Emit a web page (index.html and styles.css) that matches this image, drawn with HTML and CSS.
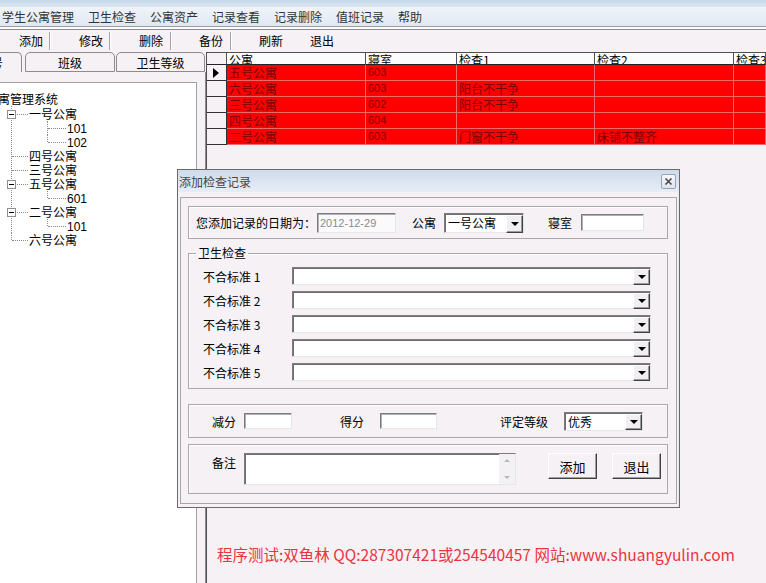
FILE: index.html
```html
<!DOCTYPE html>
<html lang="zh-CN">
<head>
<meta charset="utf-8">
<title>学生公寓管理</title>
<link rel="stylesheet" href="styles.css">
</head>
<body>
<div class="app">
  <div class="titlestrip"></div>
  <div class="menubar">
    <span>学生公寓管理</span><span>卫生检查</span><span>公寓资产</span><span>记录查看</span><span>记录删除</span><span>值班记录</span><span>帮助</span>
  </div>
  <div class="rule"></div>
  <div class="toolbar">
    <span class="tb tb1">添加</span><span class="tbsep"></span>
    <span class="tb tb2">修改</span><span class="tbsep"></span>
    <span class="tb tb3">删除</span><span class="tbsep"></span>
    <span class="tb tb4">备份</span><span class="tbsep"></span>
    <span class="tb tb5">刷新</span>
    <span class="tb tb6">退出</span>
  </div>
  <div class="main">
    <div class="leftpane">
      <div class="tabs">
        <div class="tab t0"><span>学号</span></div>
        <div class="tab t1">班级</div>
        <div class="tab t2">卫生等级</div>
      </div>
      <div class="tabbody">
        <div class="tree">
          <div class="row root"><span class="lbl">公寓管理系统</span></div>
          <ul class="l1">
            <li>
              <div class="row"><span class="box"></span><span class="lbl">一号公寓</span></div>
              <ul class="l2">
                <li><div class="row"><span class="lbl num">101</span></div></li>
                <li><div class="row"><span class="lbl num">102</span></div></li>
              </ul>
            </li>
            <li><div class="row"><span class="lbl">四号公寓</span></div></li>
            <li><div class="row"><span class="lbl">三号公寓</span></div></li>
            <li>
              <div class="row"><span class="box"></span><span class="lbl">五号公寓</span></div>
              <ul class="l2">
                <li><div class="row"><span class="lbl num">601</span></div></li>
              </ul>
            </li>
            <li>
              <div class="row"><span class="box"></span><span class="lbl">二号公寓</span></div>
              <ul class="l2">
                <li><div class="row"><span class="lbl num">101</span></div></li>
              </ul>
            </li>
            <li><div class="row"><span class="lbl">六号公寓</span></div></li>
          </ul>
        </div>
      </div>
    </div>
    <div class="gridpane">
      <div class="grid">
        <div class="gh ind"></div><div class="gh">公寓</div><div class="gh">寝室</div><div class="gh">检查1</div><div class="gh">检查2</div><div class="gh">检查3</div>

        <div class="gi"><span class="arrow"></span></div><div class="gc">五号公寓</div><div class="gc n">603</div><div class="gc"></div><div class="gc"></div><div class="gc"></div>
        <div class="gi"></div><div class="gc">六号公寓</div><div class="gc n">603</div><div class="gc">阳台不干争</div><div class="gc"></div><div class="gc"></div>
        <div class="gi"></div><div class="gc">三号公寓</div><div class="gc n">602</div><div class="gc">阳台不干争</div><div class="gc"></div><div class="gc"></div>
        <div class="gi"></div><div class="gc">四号公寓</div><div class="gc n">604</div><div class="gc"></div><div class="gc"></div><div class="gc"></div>
        <div class="gi"></div><div class="gc">二号公寓</div><div class="gc n">603</div><div class="gc">门窗不干争</div><div class="gc">床铺不整齐</div><div class="gc"></div>
      </div>
      <div class="footer">程序测试:双鱼林 QQ:287307421或254540457 网站:www.shuangyulin.com</div>
    </div>
  </div>
</div>

<div class="dialog">
  <div class="dlg-title">
    <span class="dlg-text">添加检查记录</span>
    <span class="dlg-close"><svg width="9" height="9" viewBox="0 0 9 9"><path d="M1.5 1.5 L7.5 7.5 M7.5 1.5 L1.5 7.5" stroke="#4a4a4a" stroke-width="1.6"/></svg></span>
  </div>
  <div class="dlg-body">
    <div class="panel">
      <div class="grp g1">
        <span class="t date-l">您添加记录的日期为：</span>
        <div class="field date">2012-12-29</div>
        <span class="t gy-l">公寓</span>
        <div class="combo gy"><span class="cv">一号公寓</span><span class="cb"><i></i></span></div>
        <span class="t qs-l">寝室</span>
        <div class="field qs"></div>
      </div>
      <fieldset class="grp g2">
        <legend>卫生检查</legend>
        <div class="crow"><span class="t cl">不合标准 1</span><div class="combo wide"><span class="cv"></span><span class="cb"><i></i></span></div></div>
        <div class="crow"><span class="t cl">不合标准 2</span><div class="combo wide"><span class="cv"></span><span class="cb"><i></i></span></div></div>
        <div class="crow"><span class="t cl">不合标准 3</span><div class="combo wide"><span class="cv"></span><span class="cb"><i></i></span></div></div>
        <div class="crow"><span class="t cl">不合标准 4</span><div class="combo wide"><span class="cv"></span><span class="cb"><i></i></span></div></div>
        <div class="crow"><span class="t cl">不合标准 5</span><div class="combo wide"><span class="cv"></span><span class="cb"><i></i></span></div></div>
      </fieldset>
      <div class="grp g3">
        <span class="t jf-l">减分</span>
        <div class="field jf"></div>
        <span class="t df-l">得分</span>
        <div class="field df"></div>
        <span class="t dj-l">评定等级</span>
        <div class="combo dj"><span class="cv">优秀</span><span class="cb"><i></i></span></div>
      </div>
      <div class="grp g4">
        <span class="t bz-l">备注</span>
        <div class="memo"><div class="memo-in"></div><div class="sb"><span class="up"></span><span class="dn"></span></div></div>
        <span class="btn add">添加</span>
        <span class="btn quit">退出</span>
      </div>
    </div>
  </div>
</div>
</body>
</html>
```

FILE: styles.css
```css
* { box-sizing: border-box; margin: 0; padding: 0; }
html, body { width: 766px; height: 583px; overflow: hidden; }
body {
  background: #f5f1f5;
  font-family: "Noto Sans CJK SC", "Noto Sans", sans-serif;
  font-size: 12px;
  color: #000;
  position: relative;
}
ul { list-style: none; }

.app { display: flex; flex-direction: column; height: 583px; }

.titlestrip { height: 7px; background: linear-gradient(#c6d7ea, #dbe6f2); }

.menubar {
  height: 19px;
  display: flex;
  gap: 14px;
  padding-left: 2px;
  align-items: center;
  background: linear-gradient(#f0f4fa, #e1e8f2);
  color: #333;
  line-height: 19px;
  white-space: nowrap;
}

.rule { height: 4px; border-top: 1px solid #9d9d9d; border-bottom: 1px solid #8c8c8c; background: #fdfdfd; }

.toolbar { height: 22px; display: flex; align-items: center; white-space: nowrap; }
.tb { height: 22px; line-height: 22px; display: block; }
.tb1 { width: 49px; padding-left: 19px; }
.tb2 { width: 58px; padding-left: 28px; }
.tb3 { width: 59px; padding-left: 28px; }
.tb4 { width: 58px; padding-left: 27px; }
.tb5 { width: 51px; padding-left: 27px; }
.tb6 { padding-left: 27px; }
.tbsep { width: 2px; height: 18px; border-left: 1px solid #a5a5a5; border-right: 1px solid #fff; }

.main { flex: 1; display: flex; min-height: 0; }

/* left pane */
.leftpane { width: 206px; display: flex; flex-direction: column; }
.tabs { height: 20px; display: flex; }
.tab {
  height: 20px;
  border: 1px solid #8c8c8c;
  border-radius: 5px 5px 0 0;
  display: flex; align-items: center; justify-content: center;
  background: #f5f1f5;
  white-space: nowrap;
}
.tab.t0 { width: 22px; border-left: none; border-bottom: none; justify-content: flex-end; overflow: hidden; border-radius: 0 5px 0 0; }
.tab.t0 span { margin-right: 18px; flex: none; }
.tab.t1 { width: 90px; margin-left: 3px; }
.tab.t2 { width: 89px; margin-left: 1px; }

.tabbody { flex: 1; border-right: 1px solid #8c8c8c; padding: 10px 8px 0 0; display: flex; }
.tree {
  flex: 1;
  background: #fff;
  border-top: 1px solid #a0a0a0;
  border-right: 1px solid #a0a0a0;
  padding-top: 9px;
  overflow: hidden;
}
.row { height: 14px; line-height: 14px; position: relative; white-space: nowrap; }
.root { margin-bottom: 1px; }
.root .lbl { margin-left: -14px; }
.l1 > li { position: relative; }
.l1 > li::before {
  content: ""; position: absolute; left: 11px; top: -1px; bottom: 0;
  border-left: 1px dotted #8a8a8a;
}
.l1 > li:last-child::before { bottom: auto; height: 8px; }
.l1 > li > .row { padding-left: 29px; }
.l1 > li > .row::before {
  content: ""; position: absolute; left: 12px; top: 7px; width: 16px;
  border-top: 1px dotted #8a8a8a;
}
.box {
  position: absolute; left: 7px; top: 3px; width: 9px; height: 9px;
  border: 1px solid #8f8f8f; background: #fff; z-index: 1;
}
.box::after { content: ""; position: absolute; left: 1px; top: 3px; width: 5px; height: 1px; background: #000; }
.l2 > li { position: relative; }
.l2 > li::before {
  content: ""; position: absolute; left: 47px; top: 0; bottom: 0;
  border-left: 1px dotted #8a8a8a;
}
.l2 > li:last-child::before { bottom: auto; height: 7px; }
.l2 > li > .row { padding-left: 67px; }
.l2 > li > .row::before {
  content: ""; position: absolute; left: 48px; top: 7px; width: 18px;
  border-top: 1px dotted #8a8a8a;
}
.num { font-family: "Liberation Sans", sans-serif; font-size: 12px; }

/* grid */
.gridpane { flex: 1; display: flex; flex-direction: column; border-left: 1px solid #505050; min-width: 0; }
.grid {
  display: grid;
  grid-template-columns: 20px 139px 91px 138px 139px 1fr;
  grid-auto-rows: 16px;
  grid-template-rows: 13px;
  overflow: hidden;
}
.gh {
  height: 13px; line-height: 14px;
  background: #fcfcfc;
  border-top: 1px solid #505050;
  border-bottom: 1px solid #222;
  border-right: 1px solid #505050;
  padding-left: 2px;
  overflow: hidden; white-space: nowrap;
}
.gh.ind { background: #f5f1f5; }
.gi { background: #f5f1f5; border-right: 1px solid #303030; border-bottom: 1px solid #303030; position: relative; }
.arrow {
  position: absolute; left: 6px; top: 3px; width: 0; height: 0;
  border-top: 5px solid transparent; border-bottom: 5px solid transparent; border-left: 6px solid #000;
}
.gc {
  background: #ff0000;
  border-right: 1px solid #ee6a6a;
  border-bottom: 1px solid #ee6a6a;
  color: #7a0000;
  line-height: 15px;
  padding-left: 2px;
  white-space: nowrap; overflow: hidden;
}
.gc.n { font-family: "Liberation Sans", sans-serif; font-size: 11px; color: #8a0000; }

.footer {
  margin-top: auto;
  margin-bottom: 19px;
  padding-left: 10px;
  height: 20px; line-height: 20px;
  font-size: 15.5px;
  color: #e8353f;
  white-space: nowrap;
}

/* dialog */
.dialog {
  position: absolute; left: 177px; top: 169px;
  width: 503px; height: 339px;
  border: 1px solid #6a6a6a;
  background: #f5f1f5;
  display: flex; flex-direction: column;
  box-shadow: inset -1px 0 #e8e8e8;
}
.dlg-title {
  height: 22px;
  background: linear-gradient(#cfdcec, #e6edf6);
  display: flex; align-items: center; justify-content: space-between;
  padding: 0 3px 0 1px;
}
.dlg-text { color: #444; }
.dlg-close {
  width: 15px; height: 15px;
  border: 1px solid #98a4b4; border-radius: 2px;
  background: linear-gradient(#f4f6fa, #dfe5ee);
  display: flex; align-items: center; justify-content: center;
}
.dlg-body { flex: 1; padding: 5px 2px 3px 2px; display: flex; }
.panel {
  flex: 1;
  border: 1px solid #a6a6a6;
  padding: 8px 8px 0 7px;
  display: flex; flex-direction: column;
}
.grp { border: 1px solid #a9a9a9; box-shadow: inset 1px 1px #fff; display: flex; align-items: center; }
.t { white-space: nowrap; flex: none; }

.g1 { height: 33px; }
.date-l { margin-left: 7px; width: 121px; }
.field {
  background: #fff;
  border: 1px solid; border-color: #7c7c7c #e6e6e6 #e6e6e6 #7c7c7c;
  box-shadow: inset 1px 1px #b0b0b0;
  flex: none;
}
.date { width: 79px; height: 20px; color: #8a8a8a; line-height: 18px; padding-left: 2px; font-family: "Liberation Sans", sans-serif; font-size: 11px; background: #fbfafb; }
.gy-l { margin-left: 16px; }
.combo {
  display: flex; flex: none;
  background: #fff;
  border: 1px solid; border-color: #7c7c7c #e6e6e6 #e6e6e6 #7c7c7c;
  box-shadow: inset 1px 1px #6e6e6e;
  height: 18px;
}
.cv { flex: 1; padding-left: 3px; line-height: 17px; white-space: nowrap; overflow: hidden; }
.cb {
  width: 17px; height: 16px; margin-top: 1px;
  background: #f1eff1;
  border: 1px solid; border-color: #fff #404040 #404040 #fff;
  box-shadow: inset -1px -1px #9a9a9a;
  display: flex; align-items: center; justify-content: center;
}
.cb i { width: 0; height: 0; border-left: 4px solid transparent; border-right: 4px solid transparent; border-top: 4px solid #000; }
.gy { margin-left: 8px; width: 80px; height: 20px; }
.gy .cb { height: 18px; }
.qs-l { margin-left: 24px; }
.qs { margin-left: 9px; width: 63px; height: 17px; }

.g2 { margin-top: 7px; height: 143px; display: block; padding: 0; min-width: 0; }
.g2 legend { margin-left: 7px; padding: 0 2px; line-height: 14px; }
.crow { display: flex; align-items: center; height: 24px; }
.crow:first-of-type { margin-top: 4px; }
.cl { margin-left: 14px; width: 89px; }
.wide { width: 359px; }

.g3 { margin-top: 15px; height: 34px; }
.jf-l { margin-left: 23px; }
.jf { margin-left: 8px; width: 48px; height: 16px; }
.df-l { margin-left: 48px; }
.df { margin-left: 16px; width: 57px; height: 16px; }
.dj-l { margin-left: 63px; }
.dj { margin-left: 16px; width: 79px; height: 19px; }

.g4 { margin-top: 6px; height: 50px; align-items: flex-start; padding-top: 8px; }
.bz-l { margin-left: 23px; margin-top: 1px; }
.memo {
  margin-left: 8px; width: 272px; height: 32px; display: flex;
  border: 1px solid; border-color: #7c7c7c #e6e6e6 #e6e6e6 #7c7c7c;
  box-shadow: inset 1px 1px #6e6e6e;
  background: #fff;
}
.memo-in { flex: 1; }
.sb { width: 16px; background: #f3f1f3; display: flex; flex-direction: column; justify-content: space-between; align-items: center; padding: 5px 0; }
.sb .up { width: 0; height: 0; border-left: 3px solid transparent; border-right: 3px solid transparent; border-bottom: 3px solid #b8b8b8; }
.sb .dn { width: 0; height: 0; border-left: 3px solid transparent; border-right: 3px solid transparent; border-top: 3px solid #b8b8b8; }
.btn {
  flex: none;
  width: 49px; height: 26px;
  display: flex; align-items: center; justify-content: center;
  background: #f5f1f5;
  border: 1px solid; border-color: #fff #404040 #404040 #fff;
  box-shadow: inset -1px -1px #a0a0a0;
  font-size: 13px;
}
.add { margin-left: 32px; }
.quit { margin-left: 15px; }
```
